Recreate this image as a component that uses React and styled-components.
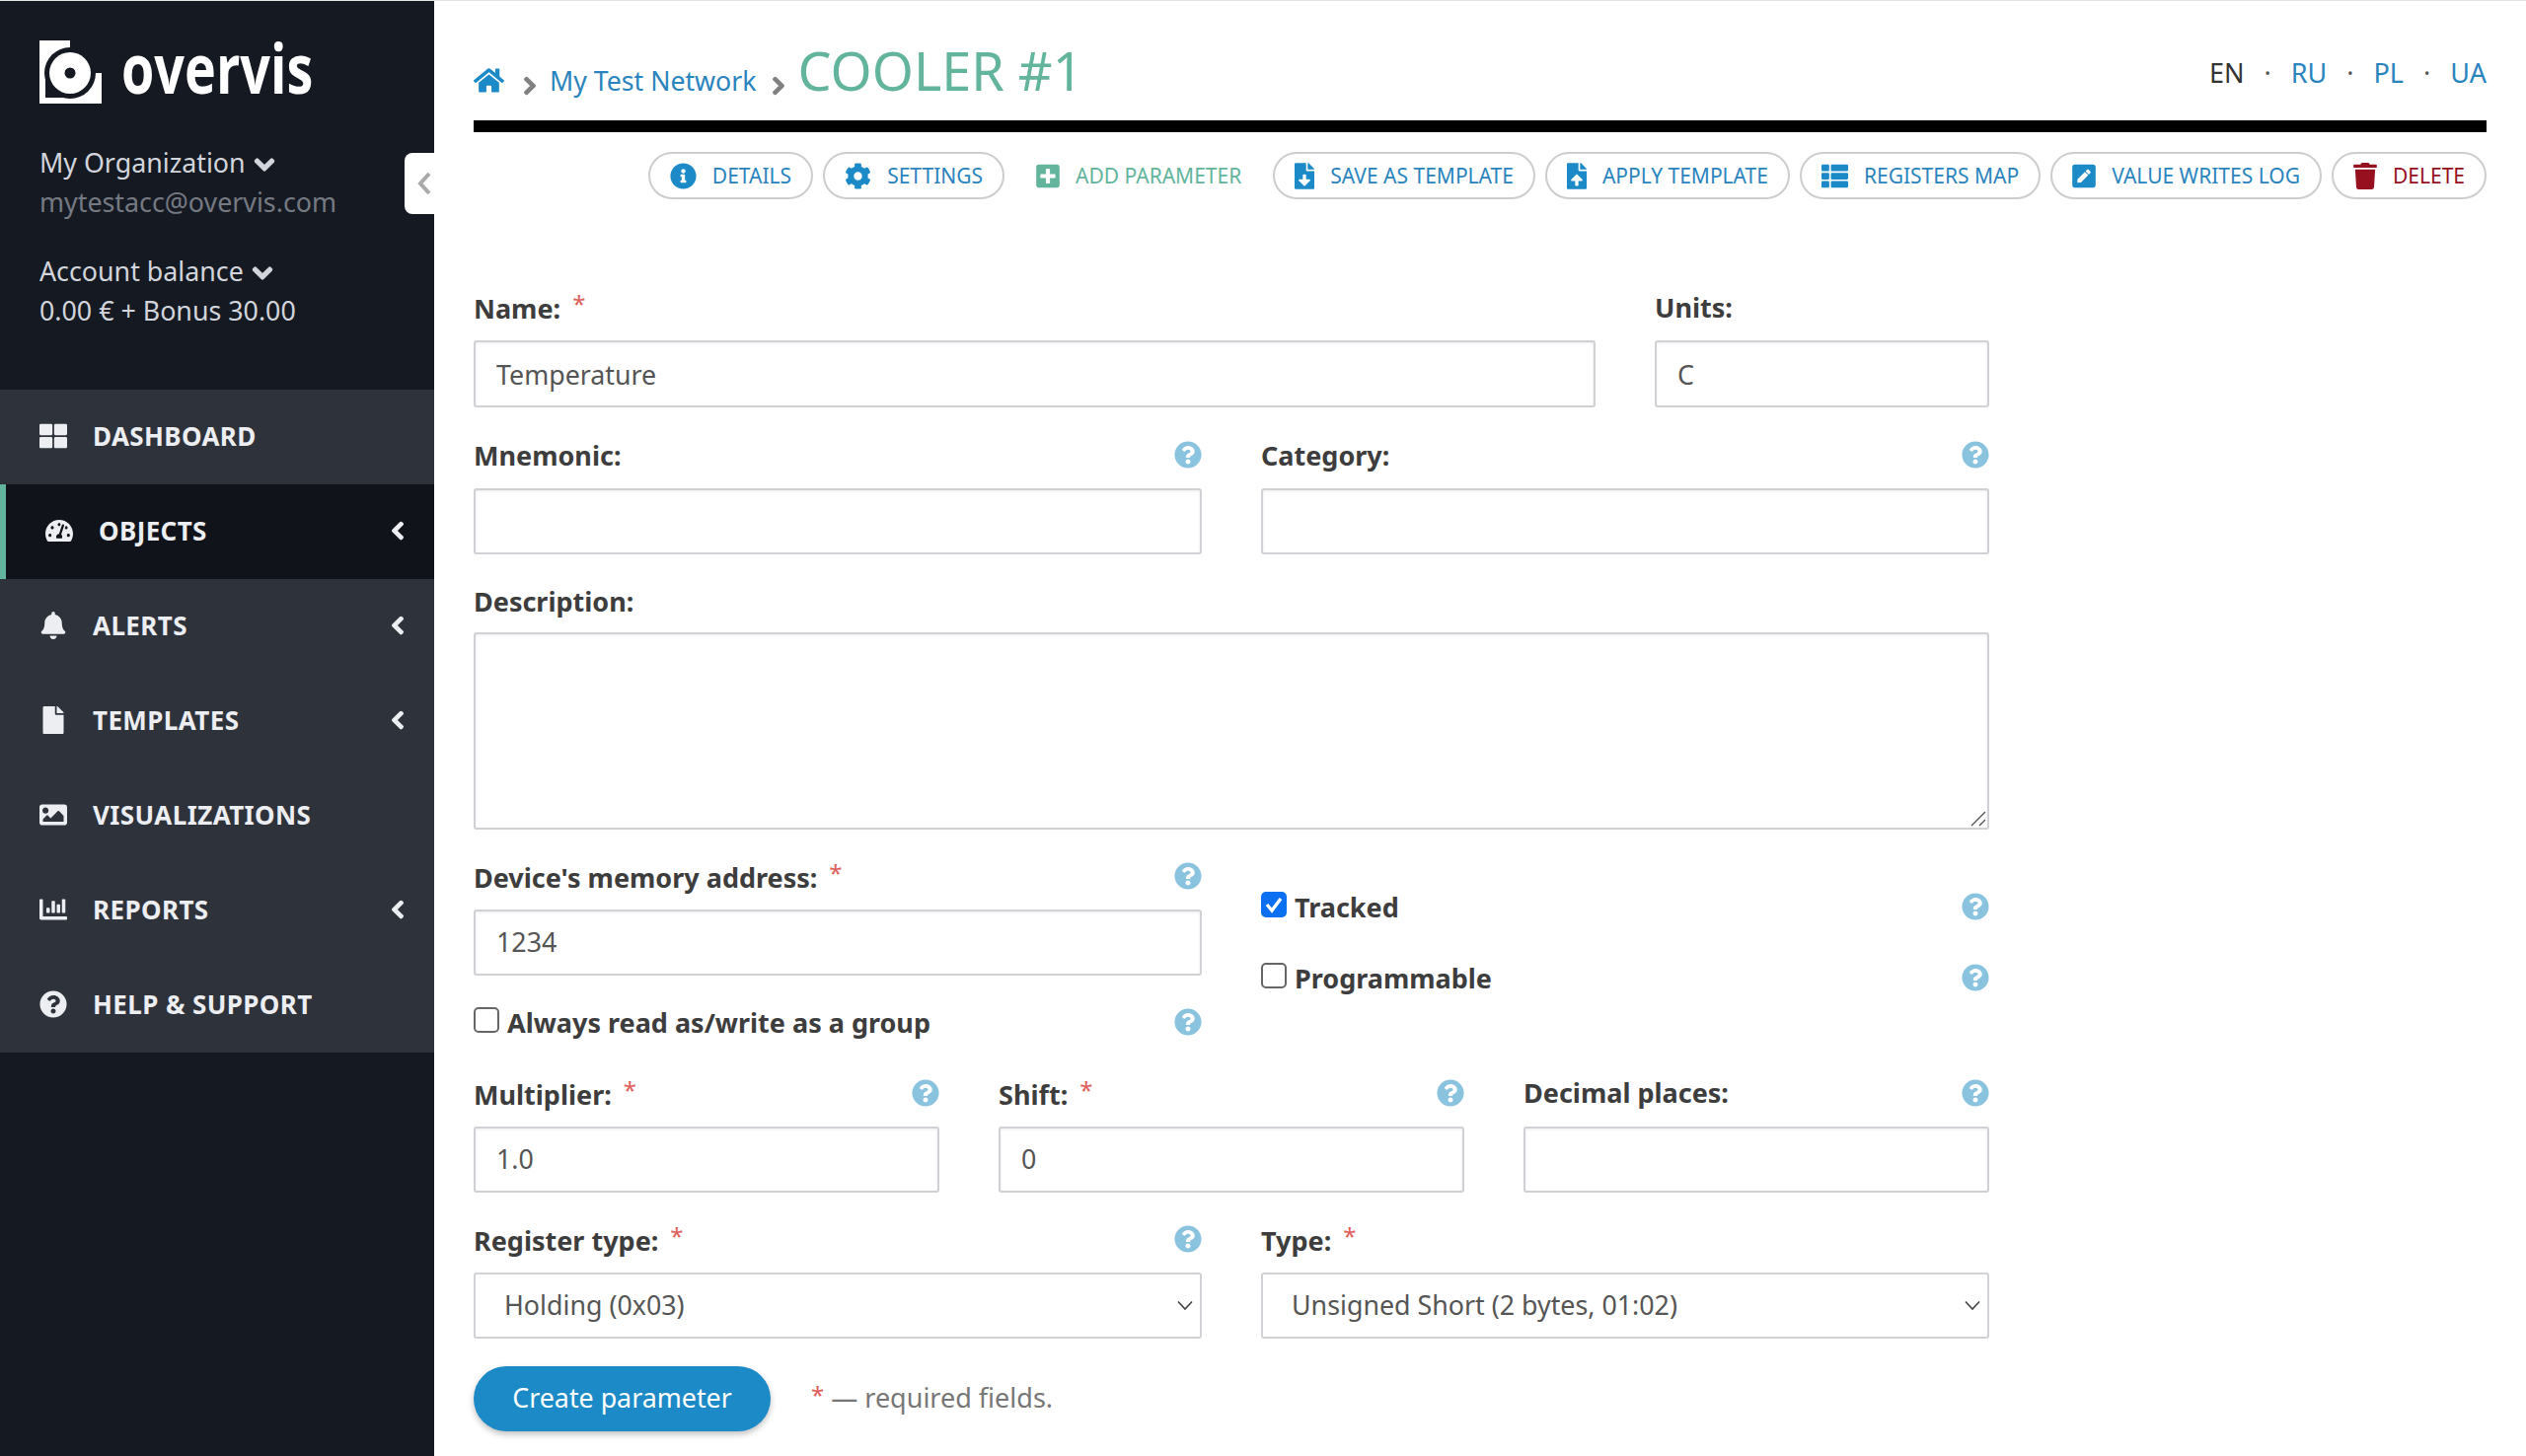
import React from 'react';
import styled, { createGlobalStyle } from 'styled-components';
import {
  FaThLarge, FaTachometerAlt, FaBell, FaFile, FaImage, FaChartBar, FaQuestionCircle,
  FaHome, FaInfoCircle, FaCog, FaPlusSquare, FaFileDownload, FaFileUpload, FaThList,
  FaPenSquare, FaTrash, FaChevronLeft, FaChevronDown, FaChevronRight,
} from 'react-icons/fa';

const GlobalStyle = createGlobalStyle`
  html, body {
    margin: 0;
    padding: 0;
    background: #fff;
    font-family: "Noto Sans", "Open Sans", sans-serif;
  }
  * { box-sizing: border-box; }
`;

const menuItems = [
  { label: 'DASHBOARD', icon: FaThLarge },
  { label: 'OBJECTS', icon: FaTachometerAlt, active: true, sub: true },
  { label: 'ALERTS', icon: FaBell, sub: true },
  { label: 'TEMPLATES', icon: FaFile, sub: true },
  { label: 'VISUALIZATIONS', icon: FaImage },
  { label: 'REPORTS', icon: FaChartBar, sub: true },
  { label: 'HELP & SUPPORT', icon: FaQuestionCircle },
];

const actions = [
  { label: 'DETAILS', icon: FaInfoCircle, width: 27 },
  { label: 'SETTINGS', icon: FaCog, width: 27 },
  { label: 'ADD PARAMETER', icon: FaPlusSquare, width: 24, plain: true },
  { label: 'SAVE AS TEMPLATE', icon: FaFileDownload, width: 20 },
  { label: 'APPLY TEMPLATE', icon: FaFileUpload, width: 20 },
  { label: 'REGISTERS MAP', icon: FaThList, width: 27 },
  { label: 'VALUE WRITES LOG', icon: FaPenSquare, width: 24 },
  { label: 'DELETE', icon: FaTrash, width: 24, danger: true },
];

const Logo = () => (
  <svg width="63" height="64" viewBox="0 0 63 64">
    <rect width="63" height="64" fill="#fff" />
    <rect x="31" y="-1" width="33" height="34" fill="#151922" />
    <rect x="6" y="33" width="25" height="25" fill="#151922" />
    <circle cx="31" cy="33" r="26" fill="#151922" />
    <circle cx="31" cy="33" r="21" fill="#fff" />
    <circle cx="31" cy="33" r="5.5" fill="#151922" />
  </svg>
);

const Field = ({ label, required, help, children }) => (
  <FieldWrap>
    <LabelRow>
      <FieldLabel>
        {label}
        {required && <Star>*</Star>}
      </FieldLabel>
      {help && <HelpIcon />}
    </LabelRow>
    {children}
  </FieldWrap>
);

const CheckRow = ({ label, checked }) => (
  <CheckLine>
    <CheckLabel>
      <CheckBox type="checkbox" defaultChecked={checked} />
      {label}
    </CheckLabel>
    <HelpIcon />
  </CheckLine>
);

const Dropdown = ({ value, children }) => (
  <SelectWrap>
    <SelectInput defaultValue={value}>{children}</SelectInput>
    <SelectArrow width="16" height="11" viewBox="0 0 16 11">
      <polyline points="1,1.5 8,9 15,1.5" fill="none" stroke="#444" strokeWidth="1.6" />
    </SelectArrow>
  </SelectWrap>
);

const App = () => (
  <Page>
    <GlobalStyle />
    <Sidebar>
      <Brand>
        <Logo />
        <BrandName>overvis</BrandName>
      </Brand>
      <Account>
        <div>My Organization <SmallDown /></div>
        <Muted>mytestacc@overvis.com</Muted>
      </Account>
      <Account>
        <div>Account balance <SmallDown /></div>
        <div>0.00 € + Bonus 30.00</div>
      </Account>
      <CollapseTab>
        <svg width="14" height="24" viewBox="0 0 14 24">
          <polyline points="12,2 3,12 12,22" fill="none" stroke="#a9a9a9" strokeWidth="4" />
        </svg>
      </CollapseTab>
      <Menu>
        {menuItems.map((item) => (
          <MenuItem key={item.label} $active={item.active}>
            <MenuIcon>
              <item.icon />
            </MenuIcon>
            <MenuText>{item.label}</MenuText>
            {item.sub && <MenuArrow />}
          </MenuItem>
        ))}
      </Menu>
    </Sidebar>

    <Main>
      <Header>
        <Crumbs>
          <HomeLink><FaHome /></HomeLink>
          <CrumbSep />
          <CrumbLink>My Test Network</CrumbLink>
          <CrumbSep />
          <Title>COOLER #1</Title>
        </Crumbs>
        <Langs>
          <span>EN</span>
          <LangDot>·</LangDot>
          <LangLink>RU</LangLink>
          <LangDot>·</LangDot>
          <LangLink>PL</LangLink>
          <LangDot>·</LangDot>
          <LangLink>UA</LangLink>
        </Langs>
      </Header>
      <Rule />
      <Toolbar>
        {actions.map((action) => (
          <ActionButton key={action.label} $plain={action.plain} $danger={action.danger}>
            <ActionIcon $width={action.width} $plain={action.plain} $danger={action.danger}>
              <action.icon />
            </ActionIcon>
            {action.label}
          </ActionButton>
        ))}
      </Toolbar>

      <Form>
        <NameRow $columns="1137px 339px">
          <Field label="Name:" required>
            <TextInput defaultValue="Temperature" />
          </Field>
          <Field label="Units:">
            <TextInput defaultValue="C" />
          </Field>
        </NameRow>
        <Row $columns="1fr 1fr">
          <Field label="Mnemonic:" help>
            <TextInput />
          </Field>
          <Field label="Category:" help>
            <TextInput />
          </Field>
        </Row>
        <Field label="Description:">
          <AreaWrap>
            <TextArea />
            <Resizer width="16" height="16" viewBox="0 0 16 16">
              <path d="M1 15 L15 1 M9 15 L15 9" stroke="#555" strokeWidth="1.4" fill="none" />
            </Resizer>
          </AreaWrap>
        </Field>
        <Row $columns="1fr 1fr">
          <div>
            <Field label="Device's memory address:" required help>
              <TextInput defaultValue="1234" />
            </Field>
            <GroupCheck>
              <CheckRow label="Always read as/write as a group" />
            </GroupCheck>
          </div>
          <CheckColumn>
            <CheckRow label="Tracked" checked />
            <CheckRow label="Programmable" />
          </CheckColumn>
        </Row>
        <Row $columns="1fr 1fr 1fr">
          <Field label="Multiplier:" required help>
            <TextInput defaultValue="1.0" />
          </Field>
          <Field label="Shift:" required help>
            <TextInput defaultValue="0" />
          </Field>
          <Field label="Decimal places:" help>
            <TextInput />
          </Field>
        </Row>
        <Row $columns="1fr 1fr">
          <Field label="Register type:" required help>
            <Dropdown value="holding">
              <option value="holding">Holding (0x03)</option>
            </Dropdown>
          </Field>
          <Field label="Type:" required>
            <Dropdown value="ushort">
              <option value="ushort">Unsigned Short (2 bytes, 01:02)</option>
            </Dropdown>
          </Field>
        </Row>
        <Actions>
          <SubmitButton type="button">Create parameter</SubmitButton>
          <Note>
            <NoteStar>*</NoteStar> — required fields.
          </Note>
        </Actions>
      </Form>
    </Main>
  </Page>
);

const Page = styled.div`
  display: flex;
  min-height: 100vh;
  border-top: 1px solid #e4e4e4;
  overflow: hidden;
`;

const Sidebar = styled.aside`
  position: relative;
  flex: 0 0 440px;
  height: 1475px;
  background: #151922;
  color: #d2d5db;
  font-size: 26.8px;
  line-height: 40px;
`;

const Brand = styled.div`
  display: flex;
  align-items: flex-start;
  padding: 40px 0 0 40px;
  height: 125px;
`;

const BrandName = styled.span`
  margin: -15px 0 0 20px;
  font-family: "Open Sans", sans-serif;
  font-size: 70px;
  line-height: 84px;
  font-weight: 700;
  color: #fff;
  transform: scaleX(0.77);
  transform-origin: left center;
`;

const Account = styled.div`
  padding: 19px 0 0 40px;
  height: 110px;
`;

const Muted = styled.div`
  color: #757982;
`;

const SmallDown = styled(FaChevronDown)`
  margin-left: 1px;
  font-size: 22px;
  vertical-align: -3px;
  stroke: currentColor;
  stroke-width: 40;
`;

const CollapseTab = styled.div`
  position: absolute;
  top: 154px;
  right: 0;
  width: 30px;
  height: 62px;
  display: flex;
  align-items: center;
  justify-content: flex-end;
  padding-right: 3px;
  background: #fff;
  border-radius: 8px 0 0 8px;
`;

const Menu = styled.nav`
  margin-top: 49px;
  background: #2e323b;
`;

const MenuItem = styled.div`
  display: flex;
  align-items: center;
  height: 96px;
  padding: 0 27px 2px 40px;
  background: ${(p) => (p.$active ? '#10131a' : 'transparent')};
  border-left: ${(p) => (p.$active ? '6px solid #62b49c' : 'none')};
  color: #eceef1;
`;

const MenuIcon = styled.span`
  flex: 0 0 28px;
  display: flex;
  justify-content: center;
  font-size: 28px;
  margin-right: 26px;
`;

const MenuText = styled.span`
  flex: 1;
  font-size: 26px;
  font-weight: 700;
  letter-spacing: 0.4px;
`;

const MenuArrow = styled(FaChevronLeft)`
  font-size: 20px;
  stroke: currentColor;
  stroke-width: 40;
`;

const Main = styled.main`
  flex: 1;
  padding: 0 40px;
  min-width: 0;
`;

const Header = styled.header`
  display: flex;
  justify-content: space-between;
  height: 121px;
`;

const Crumbs = styled.div`
  display: flex;
  align-items: center;
  padding-top: 40px;
  height: 104px;
`;

const HomeLink = styled.span`
  display: flex;
  margin-top: 17px;
  color: #1c8ac6;
  font-size: 31px;
`;

const CrumbSep = styled(FaChevronRight)`
  margin: 28px 10px 0 16px;
  font-size: 20px;
  color: #808080;
  stroke: currentColor;
  stroke-width: 40;
`;

const CrumbLink = styled.span`
  margin: 17px -4px 0 0;
  font-size: 26.7px;
  color: #2a84bd;
`;

const Title = styled.h1`
  margin: -4px 0 0 0;
  font-size: 54px;
  font-weight: 400;
  color: #62b49c;
`;

const Langs = styled.div`
  display: flex;
  align-items: center;
  height: 72px;
  margin-top: 0;
  padding-top: 72px;
  font-size: 27px;
  color: #333;
`;

const LangDot = styled.span`
  margin: 0 20px;
  color: #555;
`;

const LangLink = styled.span`
  color: #2a84bd;
`;

const Rule = styled.div`
  height: 12px;
  background: #000;
`;

const Toolbar = styled.div`
  display: flex;
  justify-content: flex-end;
  gap: 10px;
  margin-top: 20px;
`;

const ActionButton = styled.div`
  display: flex;
  align-items: center;
  height: 48px;
  padding: 0 20px;
  border: 2px solid ${(p) => (p.$plain ? 'transparent' : '#cdcdcd')};
  border-radius: 24px;
  font-size: 21px;
  color: ${(p) => (p.$danger ? '#96101f' : p.$plain ? '#62b49c' : '#2a84bd')};
`;

const ActionIcon = styled.span`
  display: flex;
  margin-right: 16px;
  color: ${(p) => (p.$danger ? '#96101f' : p.$plain ? '#62b49c' : '#1c8ac6')};

  svg {
    width: ${(p) => p.$width}px;
    height: 27px;
  }
`;

const Form = styled.form`
  width: 1536px;
  margin-top: 90px;
`;

const Row = styled.div`
  display: grid;
  grid-template-columns: ${(p) => p.$columns};
  column-gap: 60px;
`;

const NameRow = styled(Row)`
  margin-bottom: 1px;

  input {
    height: 68px;
    padding-bottom: 0;
  }
`;

const FieldWrap = styled.div`
  margin-bottom: 28px;
`;

const LabelRow = styled.div`
  display: flex;
  align-items: center;
  justify-content: space-between;
  height: 40px;
  padding-bottom: 2px;
  margin-bottom: 13px;
`;

const FieldLabel = styled.label`
  font-size: 27px;
  font-weight: 700;
  color: #3d3d3d;
`;

const Star = styled.span`
  margin-left: 12px;
  font-size: 24px;
  font-weight: 400;
  color: #e0605c;
  vertical-align: 6px;
`;

const HelpIcon = styled(FaQuestionCircle)`
  flex: none;
  font-size: 28px;
  color: #89c3de;
`;

const TextInput = styled.input`
  display: block;
  width: 100%;
  height: 67px;
  padding: 0 21px 2px;
  border: 2px solid #d0d0d5;
  border-radius: 3px;
  font-family: inherit;
  font-size: 26.8px;
  color: #555;
  box-shadow: inset 0 1px 3px rgba(0, 0, 0, 0.08);
`;

const AreaWrap = styled.div`
  position: relative;
  margin-top: -2px;
`;

const TextArea = styled.textarea`
  display: block;
  width: 100%;
  height: 200px;
  border: 2px solid #d0d0d5;
  border-radius: 3px;
  resize: none;
  box-shadow: inset 0 1px 3px rgba(0, 0, 0, 0.08);
`;

const Resizer = styled.svg`
  position: absolute;
  right: 3px;
  bottom: 3px;
`;

const SelectWrap = styled.div`
  position: relative;
`;

const SelectInput = styled.select`
  display: block;
  width: 100%;
  height: 67px;
  padding: 0 29px 2px;
  appearance: none;
  background: #fff;
  border: 2px solid #d0d0d5;
  border-radius: 3px;
  font-family: inherit;
  font-size: 26.8px;
  color: #555;
`;

const SelectArrow = styled.svg`
  position: absolute;
  right: 9px;
  top: 28px;
`;

const CheckColumn = styled.div`
  padding-top: 28px;
`;

const GroupCheck = styled.div`
  margin-top: -3px;
  padding-bottom: 2.5px;
`;

const CheckLine = styled.div`
  display: flex;
  align-items: center;
  justify-content: space-between;
  height: 44px;
  margin-bottom: 28px;
`;

const CheckLabel = styled.label`
  display: flex;
  align-items: center;
  font-size: 27px;
  font-weight: 700;
  color: #3d3d3d;
`;

const CheckBox = styled.input`
  width: 26px;
  height: 26px;
  margin: -4px 8px 0 0;
  appearance: none;
  background: #fff;
  border: 2px solid #666;
  border-radius: 5px;

  &:checked {
    border: none;
    background: #0a6ff0 url("data:image/svg+xml,%3Csvg xmlns='http://www.w3.org/2000/svg' viewBox='0 0 26 26'%3E%3Cpath d='M6 13l5 6 9-12' fill='none' stroke='white' stroke-width='3.4'/%3E%3C/svg%3E");
  }
`;

const Actions = styled.div`
  display: flex;
  align-items: center;
`;

const SubmitButton = styled.button`
  width: 301px;
  height: 66px;
  padding-bottom: 4px;
  border: none;
  border-radius: 33px;
  background: #1c8ac6;
  color: #fff;
  font-family: inherit;
  font-size: 26.8px;
  box-shadow: 0 3px 6px rgba(0, 0, 0, 0.25);
`;

const Note = styled.span`
  margin: -3px 0 0 41px;
  font-size: 27px;
  color: #777;
`;

const NoteStar = styled.span`
  color: #e0605c;
  vertical-align: 4px;
  font-size: 24px;
`;

export default App;
